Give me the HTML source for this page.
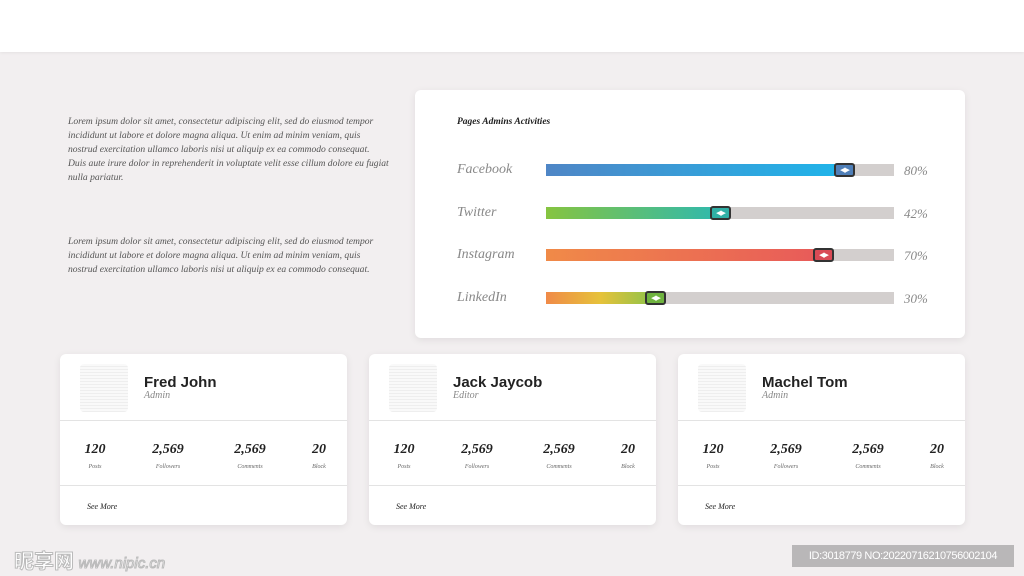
<!DOCTYPE html><html><head><meta charset="utf-8"><style>
body{margin:0;width:1024px;height:576px;background:#f2eff0;font-family:"Liberation Sans",sans-serif;position:relative;overflow:hidden}
.top{position:absolute;left:0;top:0;width:1024px;height:52px;background:#fff;box-shadow:0 1px 3px rgba(0,0,0,.06)}
.p{position:absolute;left:68px;width:322px;font:italic 9.6px/14px "Liberation Serif",serif;color:#555}
.card{position:absolute;background:#fff;border-radius:6px;box-shadow:0 2px 8px rgba(0,0,0,.08)}
.t{position:absolute;left:42px;top:27px;font:bold italic 9.5px "Liberation Serif",serif;color:#222}
.lab{position:absolute;left:42px;font:italic 14px "Liberation Serif",serif;color:#888}
.bar{position:absolute;left:131px;width:348px;height:12px;background:#d3cfce}
.fill{position:absolute;left:0;top:0;height:12px}
.h{position:absolute;top:-1px;width:21px;height:14px;border:2px solid #333;border-radius:3px;box-sizing:border-box;color:#fff;font:bold 7px/10px "DejaVu Sans",sans-serif;text-align:center;letter-spacing:-1px}
.pct{position:absolute;left:489px;font:italic 13px "Liberation Serif",serif;color:#888}
.pc{width:287px;height:171px;top:354px}
.av{position:absolute;left:20px;top:10px;width:48px;height:48px;background:repeating-linear-gradient(0deg,#eee 0 1px,#f9f9f9 1px 3px);border-radius:4px}
.nm{position:absolute;left:84px;top:20px;font:bold 15px "Liberation Sans",sans-serif;color:#222}
.rl{position:absolute;left:84px;top:36px;font:italic 10px "Liberation Serif",serif;color:#888}
.hr{position:absolute;left:0;width:287px;height:1px;background:#e3e3e3}
.st{position:absolute;top:88px;text-align:center;font:italic bold 14px "Liberation Serif",serif;color:#222;width:60px}
.st small{display:block;font:italic 6px "Liberation Serif",serif;color:#666;margin-top:6px}
.sm{position:absolute;left:27px;top:148px;font:italic 8px "Liberation Serif",serif;color:#222}
</style></head><body>
<div class="top"></div>
<div class="p" style="top:115px">Lorem ipsum dolor sit amet, consectetur adipiscing elit, sed do eiusmod tempor incididunt ut labore et dolore magna aliqua. Ut enim ad minim veniam, quis nostrud exercitation ullamco laboris nisi ut aliquip ex ea commodo consequat. Duis aute irure dolor in reprehenderit in voluptate velit esse cillum dolore eu fugiat nulla pariatur.</div>
<div class="p" style="top:235px">Lorem ipsum dolor sit amet, consectetur adipiscing elit, sed do eiusmod tempor incididunt ut labore et dolore magna aliqua. Ut enim ad minim veniam, quis nostrud exercitation ullamco laboris nisi ut aliquip ex ea commodo consequat.</div>
<div class="card" style="left:415px;top:90px;width:550px;height:248px">
<div class="t">Pages Admins Activities</div>
<div class="lab" style="top:72px">Facebook</div><div class="bar" style="top:74px"><div class="fill" style="width:298px;background:linear-gradient(90deg,#4f86c6,#1fb5ea)"></div><div class="h" style="left:288px;background:#4f7fb8">◀▶</div></div><div class="pct" style="top:73px">80%</div>
<div class="lab" style="top:115px">Twitter</div><div class="bar" style="top:117px"><div class="fill" style="width:174px;background:linear-gradient(90deg,#86c440,#2fb9ae)"></div><div class="h" style="left:164px;background:#30b0a6">◀▶</div></div><div class="pct" style="top:116px">42%</div>
<div class="lab" style="top:157px">Instagram</div><div class="bar" style="top:159px"><div class="fill" style="width:277px;background:linear-gradient(90deg,#f08a48,#e85a5a)"></div><div class="h" style="left:267px;background:#d94a55">◀▶</div></div><div class="pct" style="top:158px">70%</div>
<div class="lab" style="top:200px">LinkedIn</div><div class="bar" style="top:202px"><div class="fill" style="width:109px;background:linear-gradient(90deg,#f08a48,#e6c23a,#8bc34a)"></div><div class="h" style="left:99px;background:#6fb33f">◀▶</div></div><div class="pct" style="top:201px">30%</div>
</div>
<div class="card pc" style="left:60px"><div class="av"></div><div class="nm">Fred John</div><div class="rl">Admin</div><div class="hr" style="top:66px"></div><div class="st" style="left:5px">120<small>Posts</small></div><div class="st" style="left:78px">2,569<small>Followers</small></div><div class="st" style="left:160px">2,569<small>Comments</small></div><div class="st" style="left:229px">20<small>Block</small></div><div class="hr" style="top:131px"></div><div class="sm">See More</div></div>
<div class="card pc" style="left:369px"><div class="av"></div><div class="nm">Jack Jaycob</div><div class="rl">Editor</div><div class="hr" style="top:66px"></div><div class="st" style="left:5px">120<small>Posts</small></div><div class="st" style="left:78px">2,569<small>Followers</small></div><div class="st" style="left:160px">2,569<small>Comments</small></div><div class="st" style="left:229px">20<small>Block</small></div><div class="hr" style="top:131px"></div><div class="sm">See More</div></div>
<div class="card pc" style="left:678px"><div class="av"></div><div class="nm">Machel Tom</div><div class="rl">Admin</div><div class="hr" style="top:66px"></div><div class="st" style="left:5px">120<small>Posts</small></div><div class="st" style="left:78px">2,569<small>Followers</small></div><div class="st" style="left:160px">2,569<small>Comments</small></div><div class="st" style="left:229px">20<small>Block</small></div><div class="hr" style="top:131px"></div><div class="sm">See More</div></div>
<div style="position:absolute;left:14px;top:545px;font:bold 20px 'Noto Sans CJK SC',sans-serif;color:#fff;-webkit-text-stroke:1px #bbb">昵享网 <span style="font:italic 15px 'Liberation Sans'">www.nipic.cn</span></div>
<div style="position:absolute;left:792px;top:545px;width:222px;height:22px;background:#b9b7b8;color:#fff;font:11px/22px 'Liberation Sans',sans-serif;text-align:center;letter-spacing:-.4px">ID:3018779 NO:20220716210756002104</div>
</body></html>
